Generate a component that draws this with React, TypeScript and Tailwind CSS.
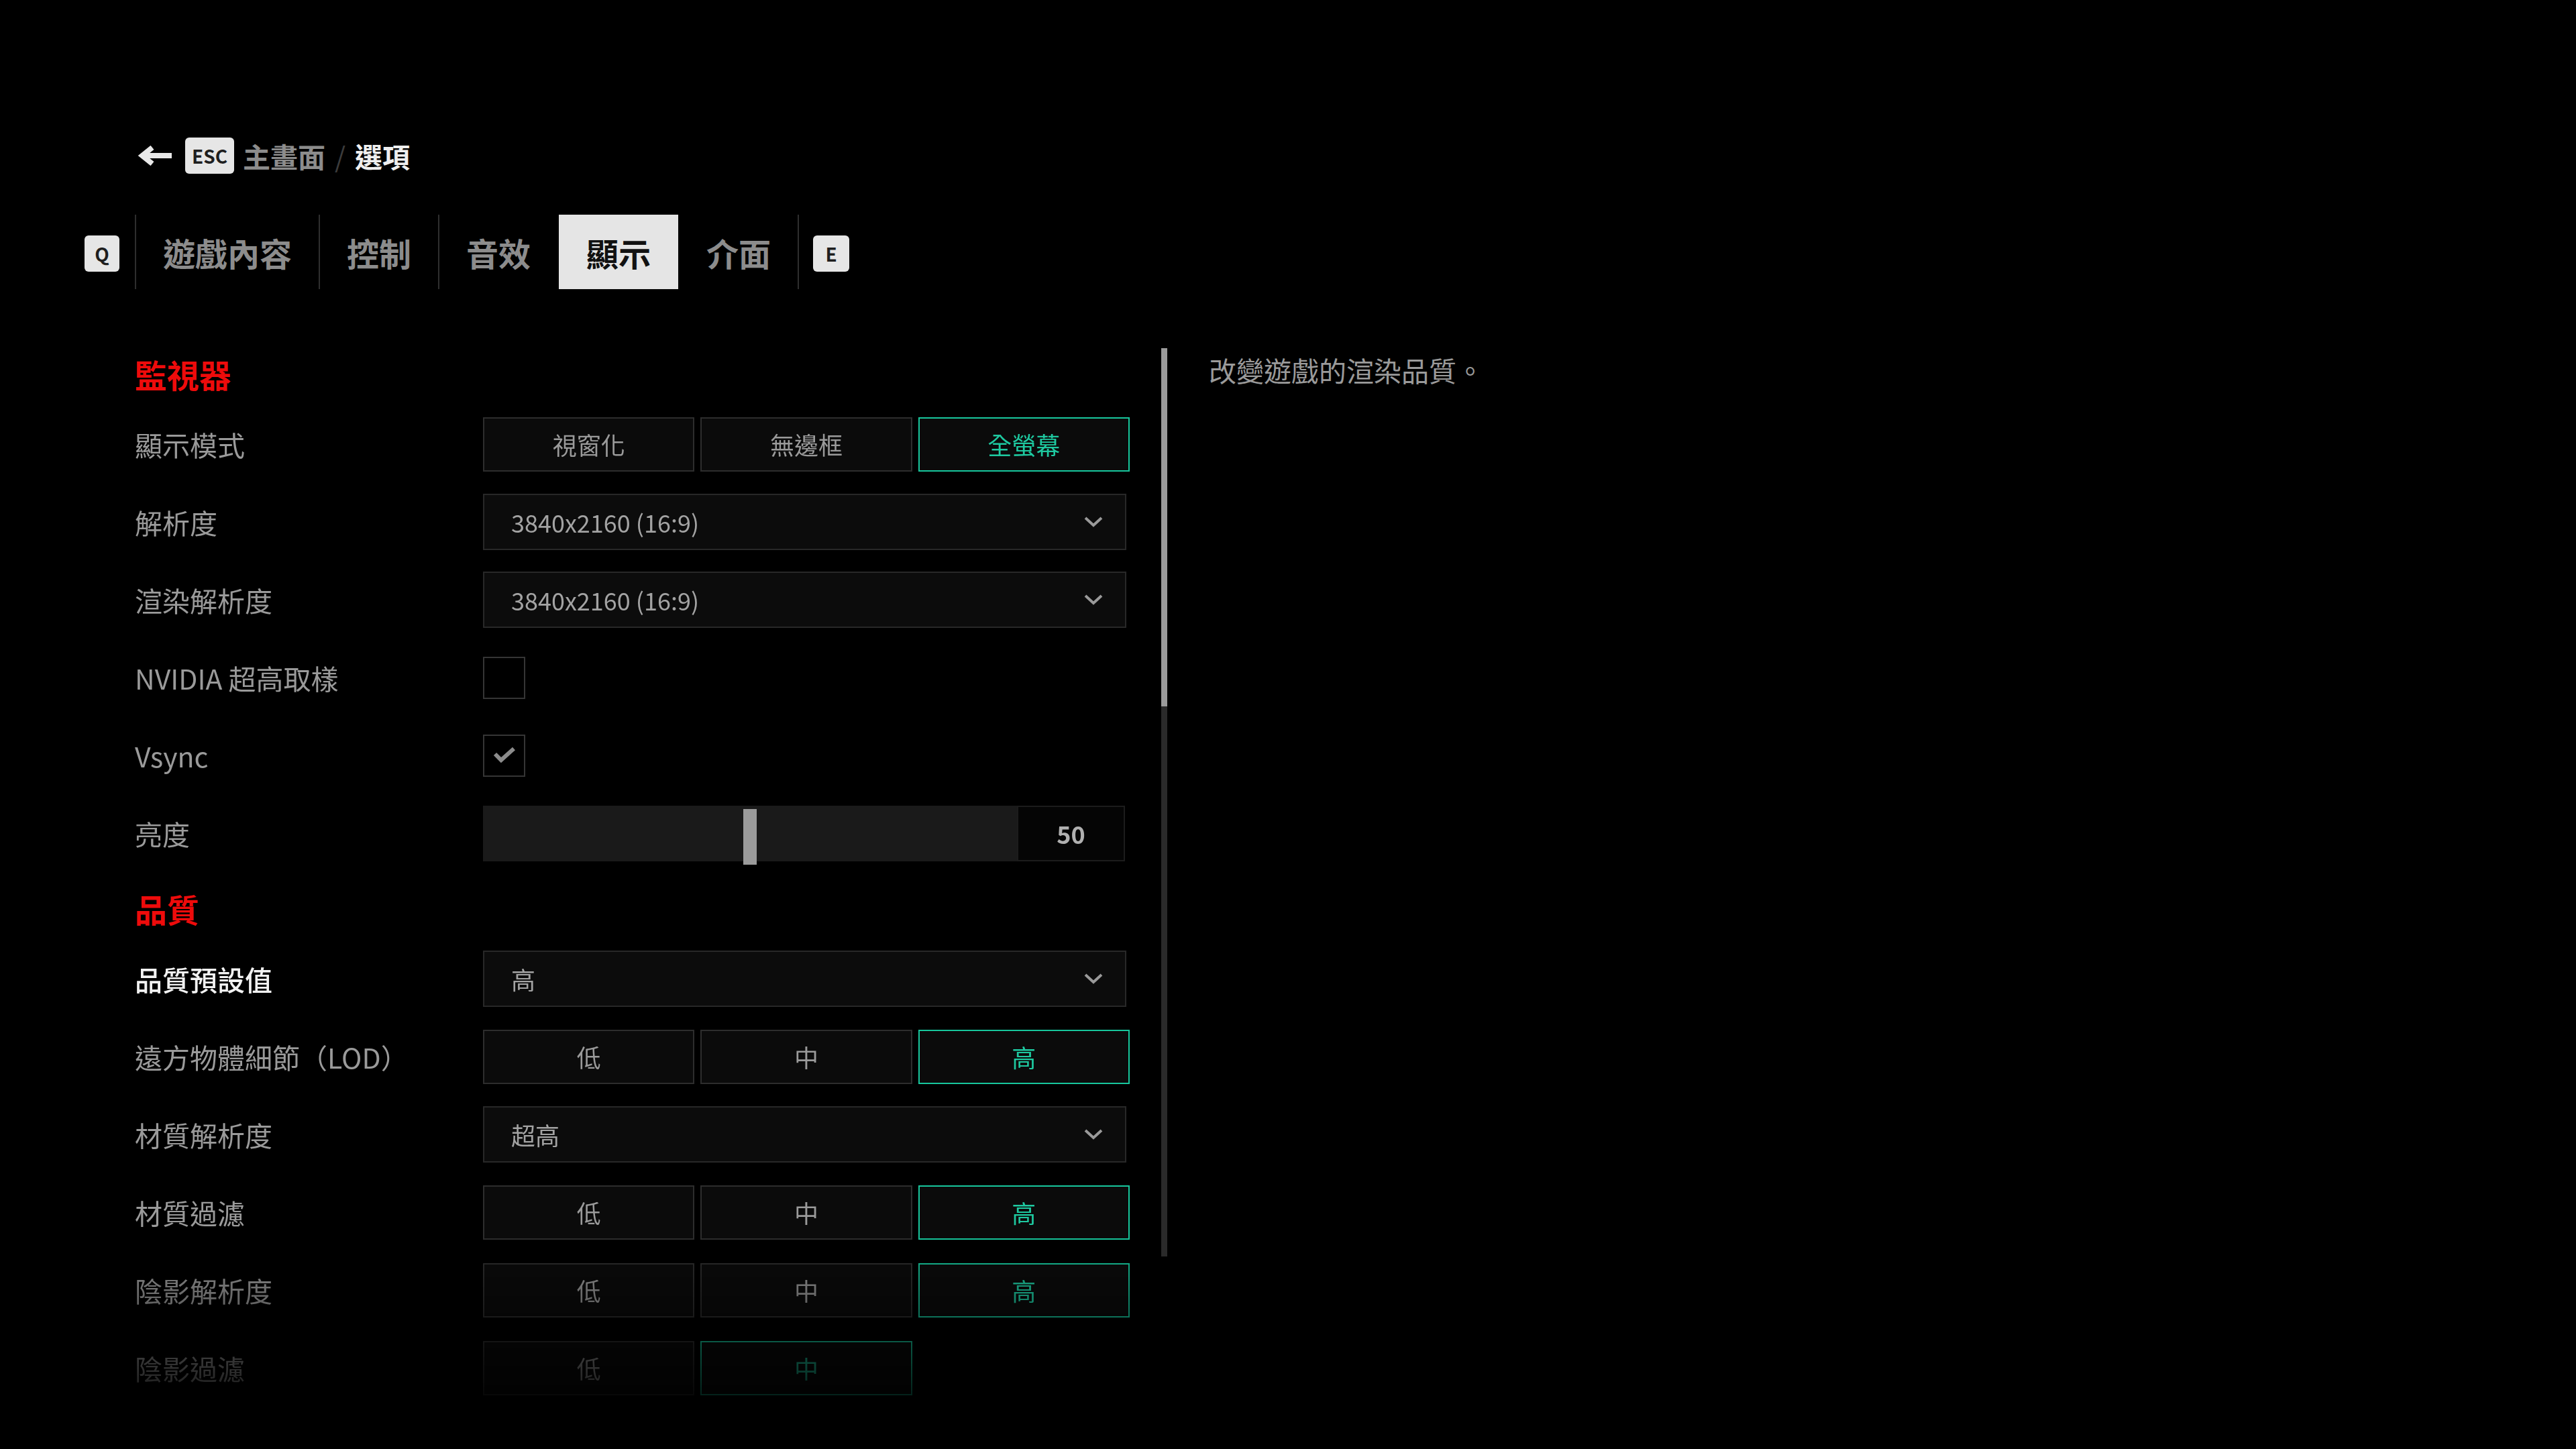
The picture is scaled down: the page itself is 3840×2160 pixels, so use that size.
import React from "react";

const FONT = "font-[Noto_Sans_CJK_TC,Noto_Sans,sans-serif]";

function Label({ children, bright }: { children: React.ReactNode; bright?: boolean }) {
  return (
    <div className={`w-[519px] shrink-0 text-[41px] leading-[56px] ${bright ? "text-[#f2f2f2] font-medium" : "text-[#9a9a9a]"}`}>
      {children}
    </div>
  );
}

function Row({ label, bright, children }: { label: React.ReactNode; bright?: boolean; children: React.ReactNode }) {
  return (
    <div className="flex items-center h-[116px] shrink-0">
      <Label bright={bright}>{label}</Label>
      {children}
    </div>
  );
}

function Segmented({ options, selected }: { options: string[]; selected: number }) {
  return (
    <div className="grid grid-cols-3 gap-x-[9px] w-[964px]">
      {options.map((o, i) => (
        <div
          key={o}
          className={`h-[81px] flex items-center justify-center bg-[#0b0b0b] border-2 text-[36px] ${
            i === selected ? "border-[#17c69c] text-[#1ec9a0]" : "border-[#2d2d2d] text-[#9a9a9a]"
          }`}
        >
          {o}
        </div>
      ))}
    </div>
  );
}

function Chevron() {
  return (
    <svg width="30" height="18" viewBox="0 0 30 18">
      <polyline points="3,3 15,14 27,3" fill="none" stroke="#9a9a9a" strokeWidth="4" />
    </svg>
  );
}

function Dropdown({ value }: { value: string }) {
  return (
    <div className="w-[959px] h-[84px] flex items-center justify-between bg-[#0c0c0c] border-2 border-[#282828] pl-[40px] pr-[32px]">
      <span className="text-[36px] text-[#a3a3a3]">{value}</span>
      <Chevron />
    </div>
  );
}

function Checkbox({ checked }: { checked?: boolean }) {
  return (
    <div className="w-[63px] h-[63px] border-2 border-[#353535] bg-black flex items-center justify-center">
      {checked ? (
        <svg width="36" height="28" viewBox="0 0 36 28">
          <polyline points="4,12 13,21 32,4" fill="none" stroke="#8c8c8c" strokeWidth="6" />
        </svg>
      ) : null}
    </div>
  );
}

function Slider() {
  return (
    <div className="flex w-[957px] h-[83px]">
      <div className="relative flex-1 bg-[#1a1a1a]">
        <div className="absolute left-[388px] top-[5px] w-[20px] h-[83px] bg-[#9b9b9b]" />
      </div>
      <div className="w-[161px] h-[83px] border-2 border-[#1c1c1c] bg-[#050505] flex items-center justify-center text-[36px] font-bold text-[#b0b0b0]">
        50
      </div>
    </div>
  );
}

function KeyCap({ k, w }: { k: string; w: string }) {
  return (
    <div className={`${w} h-[54px] rounded-[6px] bg-[#e6e6e6] flex items-center justify-center text-[#1e1e1e] font-bold text-[28px] leading-none`}>
      {k}
    </div>
  );
}

function Divider({ hidden }: { hidden?: boolean }) {
  return <div className={`w-[2px] h-[111px] ${hidden ? "bg-transparent" : "bg-[#2e2e2e]"}`} />;
}

function Tab({ label, active }: { label: string; active?: boolean }) {
  return (
    <div
      className={`h-[111px] flex items-center text-[48px] font-bold ${
        active ? "bg-[#e5e5e5] text-[#111111] px-[41px]" : "text-[#8c8c8c] px-[40px]"
      }`}
    >
      {label}
    </div>
  );
}

export default function App() {
  return (
    <div className={`w-[3840px] h-[2160px] bg-black overflow-hidden flex flex-col ${FONT}`}>
      {/* Breadcrumb */}
      <div className="flex items-center h-[54px] mt-[205px] ml-[206px] shrink-0">
        <svg width="50" height="30" viewBox="0 0 50 30">
          <path d="M50 15 H10" stroke="#e8e8e8" strokeWidth="8" fill="none" />
          <polyline points="21,3 6,15 21,27" stroke="#e8e8e8" strokeWidth="8" fill="none" />
        </svg>
        <div className="ml-[20px]">
          <KeyCap k="ESC" w="w-[73px]" />
        </div>
        <span className="ml-[13px] text-[41px] font-bold text-[#8c8c8c] leading-none">主畫面</span>
        <span className="ml-[14px] text-[41px] text-[#3c3c3c] leading-none">/</span>
        <span className="ml-[14px] text-[41px] font-bold text-[#efefef] leading-none">選項</span>
      </div>

      {/* Tabs */}
      <div className="flex items-center h-[111px] mt-[61px] ml-[126px] shrink-0">
        <div className="pt-[4px]">
          <KeyCap k="Q" w="w-[52px]" />
        </div>
        <div className="ml-[23px]" />
        <Divider />
        <Tab label="遊戲內容" />
        <Divider />
        <Tab label="控制" />
        <Divider />
        <Tab label="音效" />
        <Divider hidden />
        <Tab label="顯示" active />
        <Divider hidden />
        <Tab label="介面" />
        <Divider />
        <div className="ml-[21px]" />
        <div className="pt-[4px]">
          <KeyCap k="E" w="w-[54px]" />
        </div>
      </div>

      {/* Main */}
      <div className="flex mt-[88px] ml-[201px] flex-1 min-h-0">
        <div className="w-[1483px] h-full overflow-hidden flex flex-col [mask-image:linear-gradient(to_bottom,#000_1320px,transparent_1610px)] [-webkit-mask-image:linear-gradient(to_bottom,#000_1320px,transparent_1610px)]">
          <div className="h-[85px] pb-[10px] flex items-center shrink-0">
            <span className="text-[48px] font-bold text-[#ee0b0b] leading-none">監視器</span>
          </div>
          <Row label="顯示模式">
            <Segmented options={["視窗化", "無邊框", "全螢幕"]} selected={2} />
          </Row>
          <Row label="解析度">
            <Dropdown value="3840x2160 (16:9)" />
          </Row>
          <Row label="渲染解析度">
            <Dropdown value="3840x2160 (16:9)" />
          </Row>
          <Row label="NVIDIA 超高取樣">
            <Checkbox />
          </Row>
          <Row label="Vsync">
            <Checkbox checked />
          </Row>
          <Row label="亮度">
            <Slider />
          </Row>
          <div className="h-[101px] pt-[6px] flex items-center shrink-0">
            <span className="text-[48px] font-bold text-[#ee0b0b] leading-none">品質</span>
          </div>
          <Row label="品質預設值" bright>
            <Dropdown value="高" />
          </Row>
          <Row label="遠方物體細節（LOD）">
            <Segmented options={["低", "中", "高"]} selected={2} />
          </Row>
          <Row label="材質解析度">
            <Dropdown value="超高" />
          </Row>
          <Row label="材質過濾">
            <Segmented options={["低", "中", "高"]} selected={2} />
          </Row>
          <Row label="陰影解析度">
            <Segmented options={["低", "中", "高"]} selected={2} />
          </Row>
          <Row label="陰影過濾">
            <Segmented options={["低", "中"]} selected={1} />
          </Row>
        </div>

        {/* Scrollbar */}
        <div className="ml-[47px] w-[9px] h-[1354px] bg-[#2a2a2a] shrink-0 flex flex-col">
          <div className="h-[534px] bg-[#9b9b9b]" />
        </div>

        {/* Description */}
        <div className="ml-[62px] pt-[4px] text-[41px] leading-[56px] text-[#9a9a9a]">改變遊戲的渲染品質。</div>
      </div>
    </div>
  );
}
